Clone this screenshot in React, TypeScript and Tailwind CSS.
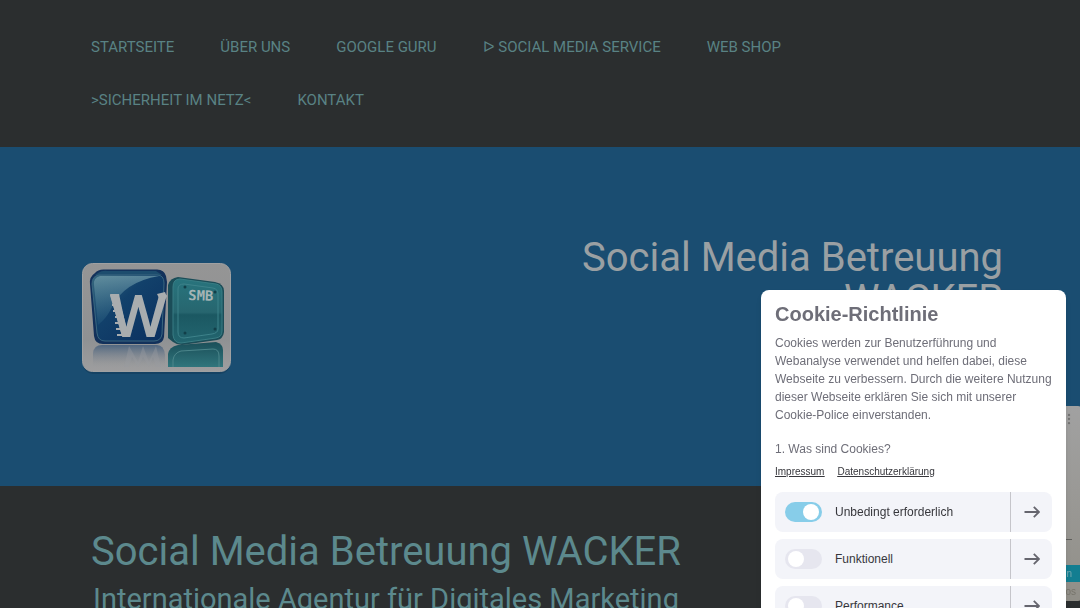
import React from 'react';
import { MoreVertical } from 'lucide-react';

const navItems = [
  'STARTSEITE',
  'ÜBER UNS',
  'GOOGLE GURU',
  'ᐅ SOCIAL MEDIA SERVICE',
  'WEB SHOP',
  '>SICHERHEIT IM NETZ<',
  'KONTAKT',
];

const cookieGroups = [
  { id: 'required', label: 'Unbedingt erforderlich', enabled: true },
  { id: 'functional', label: 'Funktionell', enabled: false },
  { id: 'performance', label: 'Performance', enabled: false },
];

const Logo: React.FC = () => (
  <svg viewBox="0 0 149 112" className="h-28 w-[149px] shrink-0" role="img" aria-label="SMB Logo">
    <defs>
      <linearGradient id="card" x1="0" y1="0" x2="0" y2="1">
        <stop offset="0" stopColor="#959595" />
        <stop offset="0.7" stopColor="#8f9193" />
        <stop offset="1" stopColor="#9e9e9f" />
      </linearGradient>
      <linearGradient id="blue" x1="0" y1="0" x2="1" y2="1">
        <stop offset="0" stopColor="#35677e" />
        <stop offset="0.4" stopColor="#12416b" />
        <stop offset="1" stopColor="#0b2f5f" />
      </linearGradient>
      <linearGradient id="gloss" x1="0" y1="0" x2="0" y2="1">
        <stop offset="0" stopColor="#6f9aa8" stopOpacity="0.75" />
        <stop offset="1" stopColor="#2c6484" stopOpacity="0.3" />
      </linearGradient>
      <linearGradient id="teal" x1="0" y1="0" x2="0" y2="1">
        <stop offset="0" stopColor="#28747d" />
        <stop offset="0.52" stopColor="#27666f" />
        <stop offset="0.56" stopColor="#1b5862" />
        <stop offset="1" stopColor="#236670" />
      </linearGradient>
      <linearGradient id="fadeBlue" x1="0" y1="0" x2="0" y2="1">
        <stop offset="0" stopColor="#4f6680" />
        <stop offset="1" stopColor="#909397" stopOpacity="0" />
      </linearGradient>
      <linearGradient id="fadeTeal" x1="0" y1="0" x2="0" y2="1">
        <stop offset="0" stopColor="#1b4f59" />
        <stop offset="1" stopColor="#30757c" />
      </linearGradient>
    </defs>
    <rect x="1" y="3" width="147" height="108" rx="10" fill="#123c5a" opacity="0.6" />
    <rect x="0.5" y="0.5" width="148" height="108" rx="10" fill="url(#card)" stroke="#a0a1a2" />

    {/* Reflections */}
    <path d="M11 90 Q12 82 20 82 H75 Q82 82 83 92 V104 H11 Z" fill="url(#fadeBlue)" />
    <path d="M42 104 L47 83 L56 99 L61 83 L67 99 L74 83 L79 104 L74 104 L71 94 L67 104 L61 94 L56 104 L50 94 L47 104 Z" fill="#999c9f" opacity="0.4" />
    <path d="M86 104 V91 Q87 84 96 82 L134 79 Q141 81 141 87 V104 Z" fill="url(#fadeTeal)" />
    <path d="M91 104 V97 Q92 90 99 88 L131 86 Q137 86 137 93 V104" fill="none" stroke="#4c868b" />

    {/* Blue cube */}
    <path d="M13 10 Q16 6 23 6.500 H74 Q82 6 84 13 L85 19 L82 74 Q81 81 73 81 H21 Q13 81 12 73 L8 21 Q7 14 13 10 Z" fill="#12315b" />
    <path d="M16 10 Q20 7 26 8 H74 L80 12 H13 Z" fill="#1d4d6e" />
    <path d="M17 12 H75 Q82 12 82 20 L80 71 Q79 78 72 78 H23 Q16 78 15 70 L10 21 Q10 13 17 12 Z" fill="url(#blue)" stroke="#3a6780" />
    <path d="M18 13 H77 Q42 19 30 44 Q25 55 16 62 L12 22 Q11 15 18 13 Z" fill="url(#gloss)" />
    <text x="29" y="73" fontFamily="Liberation Sans" fontSize="58" fill="#a9adaf" stroke="#a9adaf" strokeWidth="2">W</text>
    <path d="M28 31 H37 L46 73 H40 Z M75 31 L83 29 L85 34 L79 39 Z" fill="#a9adaf" />
    <path d="M30 42 H37 M31 48 H37 M33 54 H39 M33 60 H39 M34 66 H40 M35 72 H41" stroke="#a9adaf" strokeWidth="2" />

    {/* Teal cube */}
    <path d="M86 22 Q88 15 96 14 L133 19 Q142 21 142 28 V69 Q141 76 135 77 L100 82 Q95 82 91 79 L86 75 Z" fill="#1b4d58" />
    <path d="M91 24 Q91 16 98 16 L134 21 Q140 22 140 29 V68 Q140 74 134 75 L99 80 Q92 80 91 72 Z" fill="url(#teal)" stroke="#387d84" />
    <path d="M96 26 Q96 21 102 21 L131 25 Q136 26 136 31 V66 Q136 70 130 71 L102 75 Q96 75 96 69 Z" fill="none" stroke="#3d828a" />
    <g fill="#123f49">
      <circle cx="103" cy="24" r="1.500" />
      <circle cx="133" cy="29" r="1.500" />
      <circle cx="103" cy="70" r="1.500" />
      <circle cx="133" cy="66" r="1.500" />
    </g>
    <text x="106" y="37" fontFamily="DejaVu Sans Mono" fontSize="14" fontWeight="700" fill="#a5b4b5" transform="rotate(2 106 37)">SMB</text>
  </svg>
);

const ArrowIcon: React.FC = () => (
  <svg viewBox="0 0 16 12" className="h-3 w-4" fill="none" stroke="currentColor" strokeWidth="1.8" aria-hidden="true">
    <path d="M0.500 6 H15 M9.800 0.800 L15 6 L9.800 11.200" />
  </svg>
);

const CookieDialog: React.FC = () => (
  <section
    role="dialog"
    aria-labelledby="cookie-title"
    className="fixed right-3.5 top-[290px] z-20 w-[305px] rounded-lg bg-white px-3.5 pb-4 pt-3 font-['Liberation_Sans',sans-serif] text-xs text-[#6e6e78] shadow-md"
  >
    <h2 id="cookie-title" className="text-xl leading-6 font-bold">Cookie-Richtlinie</h2>
    <p className="mt-2 leading-[18px]">
      Cookies werden zur Benutzerführung und Webanalyse verwendet und helfen dabei, diese Webseite zu verbessern. Durch
      die weitere Nutzung dieser Webseite erklären Sie sich mit unserer Cookie-Police einverstanden.
    </p>
    <p className="mt-4 leading-[18px]">1. Was sind Cookies?</p>
    <div className="mt-1.5 flex gap-[13px] text-[10px] leading-4 text-[#37373c] underline">
      <a href="#impressum">Impressum</a>
      <a href="#datenschutz">Datenschutzerklärung</a>
    </div>
    <div className="mt-3 flex flex-col gap-[7px]">
      {cookieGroups.map((group) => (
        <div key={group.id} className="flex h-10 rounded-lg bg-[#f3f4f9] text-[#37373c]">
          <label htmlFor={group.id} className="flex flex-1 items-center gap-[13px] pl-2.5">
            <input
              id={group.id}
              type="checkbox"
              role="switch"
              defaultChecked={group.enabled}
              className="flex h-5 w-[37px] appearance-none items-center rounded-full bg-[#e6e6ef] px-[3px] before:size-4 before:rounded-full before:bg-white checked:justify-end checked:bg-[#87cde9]"
            />
            {group.label}
          </label>
          <button
            type="button"
            aria-label={`${group.label} Details`}
            className="flex w-[42px] items-center justify-center border-l border-[#c5c5ca] text-[#65656e]"
          >
            <ArrowIcon />
          </button>
        </div>
      ))}
    </div>
  </section>
);

const ChatWidget: React.FC = () => (
  <aside className="fixed -right-1 top-[406px] z-10 flex h-[195px] w-16 flex-col overflow-hidden rounded-md bg-gradient-to-b from-[#a1a1a1] to-[#918f88] font-['Liberation_Sans',sans-serif] text-[10px] text-[#77746b]">
    <button type="button" aria-label="Menü" className="mt-1.5 mr-2 self-end text-[#747474]">
      <MoreVertical className="size-3.5" />
    </button>
    <div className="mt-auto mr-3 border-b border-[#5f5f5c]" />
    <button type="button" className="mt-[25px] h-[17px] bg-[#137e91] pr-3 text-right text-[#78a9b0]">Chatten</button>
    <span className="h-[19px] pr-2 text-right leading-[19px]">Infos</span>
  </aside>
);

const App: React.FC = () => {
  return (
    <div className="h-screen overflow-hidden bg-[#2b2e2f] font-[Roboto,sans-serif]">
      {/* Navigation */}
      <header className="pt-[21px] pr-[100px] pb-5 pl-[91px]">
        <nav className="flex flex-wrap gap-x-[46px]">
          {navItems.map((item) => (
            <a key={item} href="#" className="text-[15px] leading-[53px] whitespace-nowrap text-[#598284]">
              {item}
            </a>
          ))}
        </nav>
      </header>

      {/* Hero */}
      <div className="flex h-[339px] items-center justify-between bg-[#1a4d71] pl-[82px] pr-[77px]">
        <div className="pt-1">
          <Logo />
        </div>
        <h1 className="w-[440px] pb-[76px] text-right text-[40px] leading-[42px] text-[#9aa0a3]">
          Social Media Betreuung WACKER
        </h1>
      </div>

      {/* Intro */}
      <main className="px-[88px] pt-[45px] text-[#5c898d]">
        <div className="w-[596px] text-center">
          <h2 className="text-[40px] leading-[42px]">Social Media Betreuung WACKER</h2>
          <h3 className="mt-2 text-[29px] leading-9">Internationale Agentur für Digitales Marketing</h3>
        </div>
      </main>

      <ChatWidget />
      <CookieDialog />
    </div>
  );
};

export default App;
